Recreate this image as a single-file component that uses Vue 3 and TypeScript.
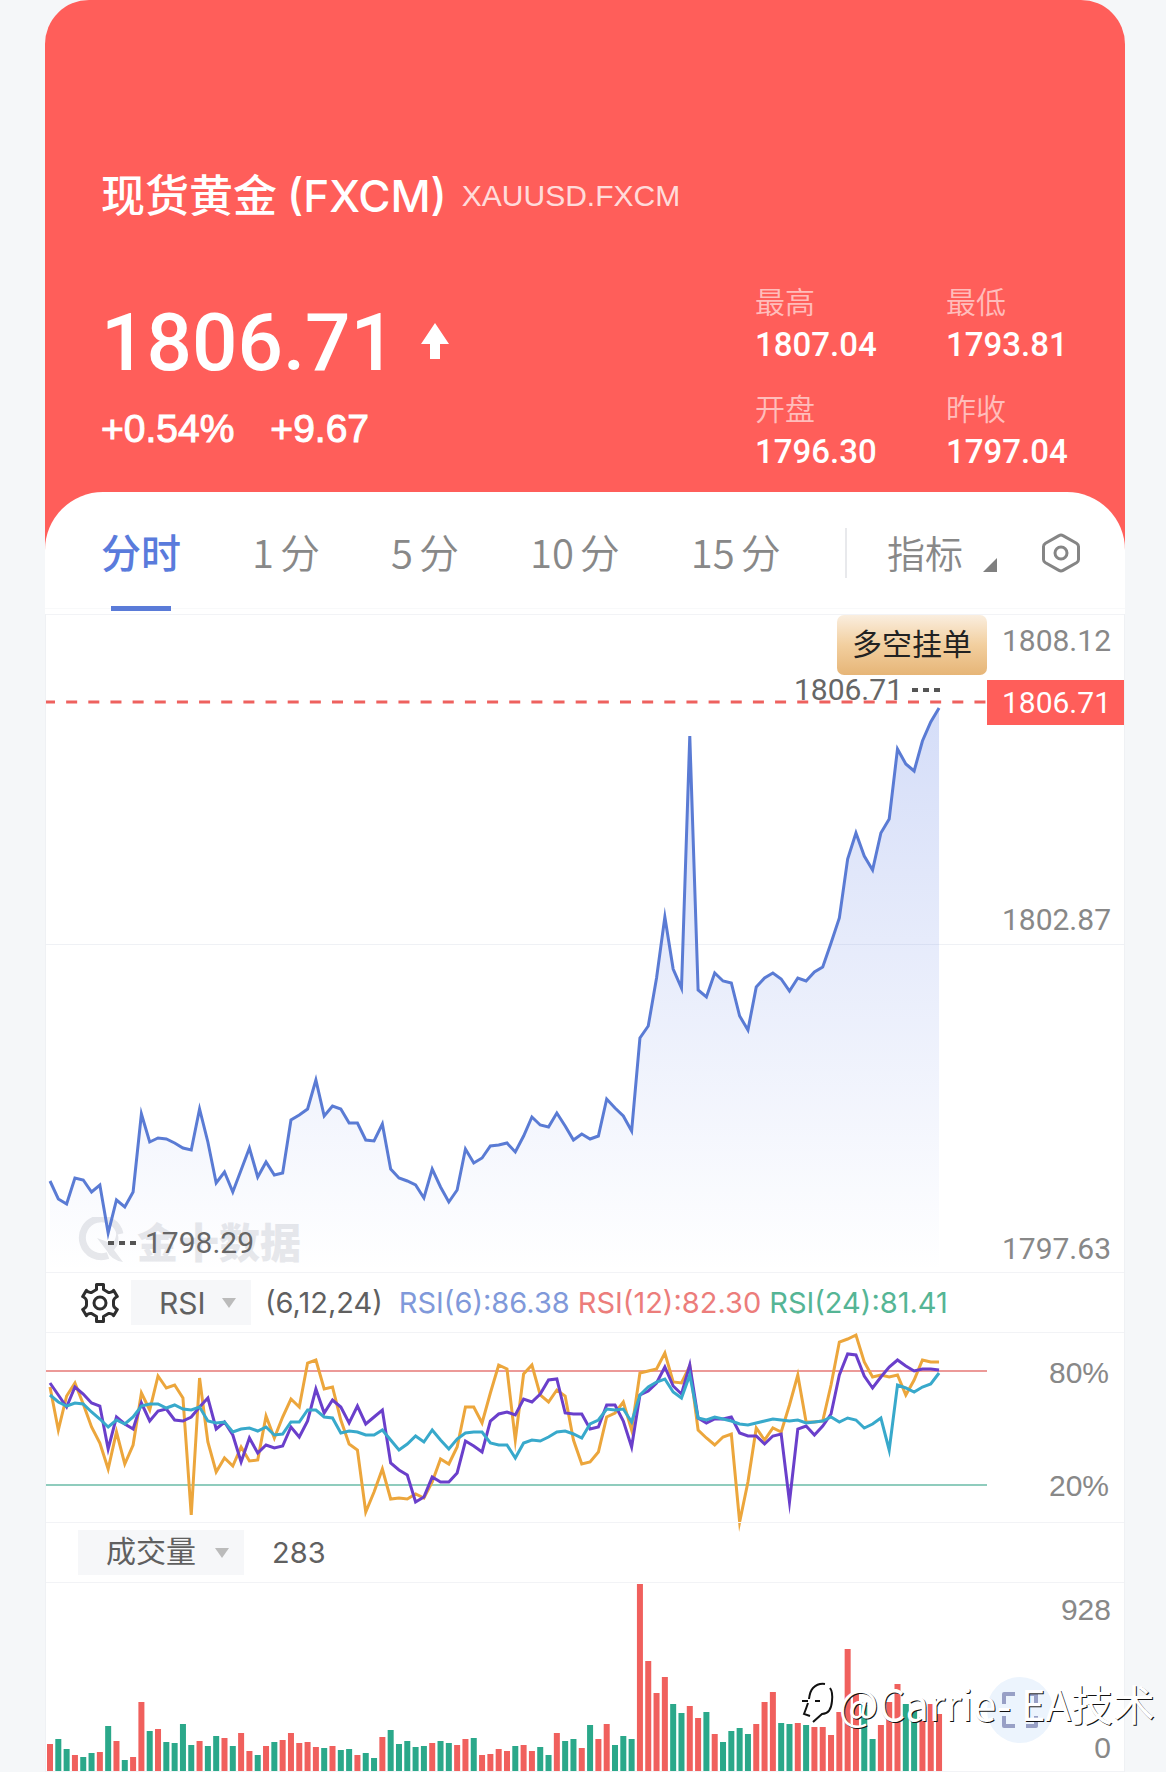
<script setup lang="ts">
import { ref } from 'vue'

interface Stat { label: string; value: string }
interface Tab { id: string; count: string; unit: string }

const stats: Stat[] = [
  { label: '最高', value: '1807.04' },
  { label: '最低', value: '1793.81' },
  { label: '开盘', value: '1796.30' },
  { label: '昨收', value: '1797.04' },
]

const tabs: Tab[] = [
  { id: 'line', count: '', unit: '分时' },
  { id: 'm1', count: '1', unit: '分' },
  { id: 'm5', count: '5', unit: '分' },
  { id: 'm10', count: '10', unit: '分' },
  { id: 'm15', count: '15', unit: '分' },
]
const active = ref('line')
const indicator = ref('RSI')
const lower = ref('成交量')

/* Samples share one horizontal step; vertical values are sheet units. */
const STEP = 8.3
const START = 4
const PRICE_TOP = 615
const PRICE_HEIGHT = 657
const RSI_TOP = 1333

const price: number[] = [
  1181, 1199, 1204, 1178, 1180, 1192, 1185, 1233, 1200, 1207, 1192, 1114, 1142, 1138, 1139, 1143, 1148, 1150,
  1109, 1142, 1183, 1172, 1192, 1170, 1148, 1177, 1162, 1175, 1173, 1120, 1115, 1109, 1080, 1116, 1106, 1109,
  1123, 1123, 1140, 1141, 1124, 1169, 1178, 1181, 1185, 1198, 1169, 1187, 1202, 1190, 1149, 1163, 1158, 1146,
  1145, 1143, 1152, 1136, 1117, 1125, 1127, 1113, 1126, 1140, 1134, 1139, 1136, 1099, 1108, 1116, 1131, 1038,
  1026, 978, 917, 969, 988, 736, 990, 997, 973, 981, 983, 1016, 1030, 987, 978, 973, 979, 991, 978, 981, 972,
  967, 943, 918, 859, 833, 856, 870, 833, 819, 749, 764, 771, 741, 722, 708,
]

const rsi6: number[] = [
  1387, 1430, 1396, 1383, 1404, 1427, 1443, 1469, 1432, 1464, 1445, 1393, 1410, 1376, 1388, 1385, 1398, 1515,
  1378, 1442, 1472, 1458, 1466, 1447, 1461, 1460, 1416, 1438, 1417, 1399, 1407, 1363, 1360, 1389, 1387, 1420,
  1444, 1450, 1512, 1492, 1469, 1499, 1498, 1499, 1494, 1498, 1482, 1459, 1464, 1447, 1407, 1407, 1423, 1393,
  1365, 1369, 1440, 1374, 1365, 1395, 1402, 1390, 1396, 1440, 1464, 1462, 1452, 1417, 1413, 1402, 1430, 1373,
  1371, 1369, 1353, 1382, 1383, 1366, 1430, 1438, 1445, 1437, 1434, 1522, 1482, 1428, 1440, 1428, 1432, 1405,
  1375, 1422, 1422, 1421, 1385, 1342, 1339, 1335, 1362, 1377, 1375, 1377, 1375, 1395, 1380, 1360, 1362, 1362,
]

const rsi12: number[] = [
  1383, 1395, 1407, 1387, 1394, 1403, 1406, 1449, 1417, 1424, 1429, 1403, 1421, 1411, 1409, 1420, 1421, 1417,
  1407, 1398, 1429, 1422, 1435, 1462, 1438, 1453, 1445, 1448, 1446, 1427, 1437, 1421, 1389, 1413, 1400, 1407,
  1423, 1406, 1424, 1417, 1410, 1463, 1470, 1475, 1502, 1497, 1477, 1482, 1482, 1473, 1441, 1446, 1452, 1421,
  1414, 1412, 1415, 1399, 1402, 1394, 1380, 1379, 1413, 1414, 1414, 1429, 1427, 1405, 1405, 1421, 1447, 1395,
  1391, 1383, 1367, 1386, 1394, 1365, 1418, 1423, 1419, 1419, 1417, 1433, 1436, 1436, 1444, 1436, 1434, 1502,
  1429, 1426, 1435, 1426, 1414, 1375, 1354, 1355, 1376, 1388, 1377, 1367, 1360, 1366, 1371, 1369, 1369, 1370,
]

const rsi24: number[] = [
  1395, 1402, 1406, 1403, 1404, 1412, 1419, 1427, 1420, 1424, 1417, 1406, 1404, 1404, 1408, 1405, 1409, 1410,
  1407, 1421, 1423, 1422, 1432, 1429, 1428, 1431, 1427, 1435, 1434, 1422, 1422, 1410, 1410, 1417, 1418, 1433,
  1431, 1432, 1435, 1435, 1430, 1440, 1450, 1444, 1436, 1442, 1430, 1440, 1449, 1439, 1433, 1432, 1432, 1443,
  1445, 1445, 1458, 1443, 1440, 1441, 1437, 1432, 1431, 1434, 1438, 1424, 1420, 1409, 1410, 1409, 1422, 1395,
  1387, 1382, 1379, 1392, 1398, 1375, 1418, 1420, 1417, 1419, 1421, 1424, 1425, 1423, 1421, 1419, 1420, 1421,
  1420, 1423, 1422, 1421, 1417, 1422, 1418, 1420, 1428, 1424, 1418, 1450, 1385, 1388, 1392, 1387, 1384, 1373,
]

const volume: number[] = [
  27, 32, 22, 16, 14, 18, 19, 45, 30, 11, 14, 69, 40, 42, 29, 28, 47, 26, 30, 25, 35, 33, 25, 38, 20, 16, 25,
  29, 31, 38, 28, 29, 24, 23, 25, 21, 22, 16, 18, 13, 34, 41, 27, 30, 24, 25, 28, 30, 28, 26, 32, 33, 16, 17,
  22, 20, 25, 26, 20, 24, 16, 38, 30, 32, 23, 46, 32, 47, 26, 35, 32, 187, 110, 78, 94, 67, 58, 65, 53, 59,
  37, 29, 40, 43, 37, 47, 69, 79, 48, 47, 48, 46, 44, 44, 36, 59, 122, 77, 66, 32, 46, 69, 87, 67, 60, 54,
  67, 57,
]
/* Sample numbers that closed lower; the rest closed higher. */
const falling = new Set<number>([
  1, 2, 4, 5, 7, 9, 12, 14, 15, 16, 17, 19, 20, 22, 25, 27, 33, 35, 36, 38, 39, 41, 42, 43, 44, 45, 47, 48, 51,
  56, 59, 60, 62, 63, 65, 68, 69, 70, 75, 76, 79, 81, 82, 83, 84, 88, 89, 91, 98, 99, 103, 104,
])

const px = (i: number): number => Math.round((START + i * STEP) * 10) / 10
const trace = (values: number[], top: number): string =>
  values.map((v, i) => `${px(i)},${v - top}`).join(' ')

const priceLine = trace(price, PRICE_TOP)
const priceArea = `${px(0)},${PRICE_HEIGHT} ${priceLine} ${px(price.length - 1)},${PRICE_HEIGHT}`
const rsiLines = [
  { id: 'rsi6', color: '#eca63c', points: trace(rsi6, RSI_TOP) },
  { id: 'rsi12', color: '#6a3fcb', points: trace(rsi12, RSI_TOP) },
  { id: 'rsi24', color: '#38a9cb', points: trace(rsi24, RSI_TOP) },
]
const bars = volume.map((h, i) => ({
  x: px(i) - 3,
  y: 188 - h,
  h,
  color: falling.has(i) ? '#2ba88a' : '#f0605d',
}))
</script>

<template>
  <main class="page">
    <header class="hero">
      <h1 class="title">
        <span class="name">现货黄金</span><span class="market">(FXCM)</span><span class="symbol">XAUUSD.FXCM</span>
      </h1>
      <div class="quote">
        <div class="last">
          <div class="price">
            <span>1806.71</span>
            <svg width="28" height="36" viewBox="0 0 28 36" aria-hidden="true">
              <path d="M14 0 28 21H19V36H9V21H0Z" fill="#fff" />
            </svg>
          </div>
          <div class="change"><span>+0.54%</span><span>+9.67</span></div>
        </div>
        <dl class="stats">
          <div v-for="s in stats" :key="s.label">
            <dt>{{ s.label }}</dt>
            <dd>{{ s.value }}</dd>
          </div>
        </dl>
      </div>
    </header>

    <section class="sheet">
      <nav class="toolbar">
        <div class="tabs">
          <button
            v-for="t in tabs"
            :key="t.id"
            type="button"
            class="tab"
            :class="{ active: active === t.id }"
            @click="active = t.id"
          >
            <span v-if="t.count">{{ t.count }}</span><span>{{ t.unit }}</span>
          </button>
        </div>
        <div class="tools">
          <button type="button" class="tool">
            指标
            <svg class="corner" width="14" height="14" viewBox="0 0 14 14" aria-hidden="true">
              <path d="M14 0V14H0Z" fill="#808080" />
            </svg>
          </button>
          <button type="button" class="hex" aria-label="设置">
            <svg width="38" height="40" viewBox="0 0 38 40" fill="none" stroke="#858585" stroke-width="3" stroke-linejoin="round">
              <path d="M17 2.6Q19 1.4 21 2.6L34.500 10.200Q36.500 11.400 36.500 13.500V26.500Q36.500 28.600 34.500 29.800L21 37.400Q19 38.600 17 37.400L3.500 29.800Q1.500 28.600 1.500 26.500V13.500Q1.500 11.400 3.500 10.200Z" />
              <circle cx="19" cy="20" r="6" />
            </svg>
          </button>
        </div>
      </nav>

      <div class="charts">
        <div class="row price-row">
          <div class="plot">
            <div class="mark">
              <svg width="48" height="46" viewBox="0 0 48 46" fill="none" aria-hidden="true">
                <path d="M31 38.500A19 19 0 1 1 43 17" stroke="#e7e8eb" stroke-width="7" />
                <path d="M40 14Q44 26 37 33L46 45Q34 43 30 34L20 21 36 27Q39 21 40 14Z" fill="#e7e8eb" />
              </svg>
              <span>金十数据</span>
            </div>
            <svg class="canvas" viewBox="0 0 940 657" preserveAspectRatio="none">
              <defs>
                <linearGradient id="fade" gradientUnits="userSpaceOnUse" x1="0" y1="90" x2="0" y2="657">
                  <stop offset="0" stop-color="#5b7ce4" stop-opacity="0.26" />
                  <stop offset="0.5" stop-color="#5b7ce4" stop-opacity="0.13" />
                  <stop offset="1" stop-color="#5b7ce4" stop-opacity="0" />
                </linearGradient>
              </defs>
              <polygon :points="priceArea" fill="url(#fade)" />
              <line x1="0" y1="87" x2="940" y2="87" stroke="#ee615e" stroke-width="3" stroke-dasharray="11 11.13" stroke-dashoffset="2" />
              <polyline :points="priceLine" fill="none" stroke="#5a7bd4" stroke-width="3" stroke-miterlimit="10" />
            </svg>
            <button type="button" class="badge">多空挂单</button>
            <span class="tip high">1806.71<i></i></span>
            <span class="tip low"><i></i>1798.29</span>
          </div>
          <div class="axis price-axis">
            <span>1808.12</span>
            <span class="middle">1802.87</span>
            <span class="lowest">1797.63</span>
            <strong>1806.71</strong>
          </div>
        </div>

        <div class="bar">
          <button type="button" class="gear" aria-label="指标设置">
            <svg width="38" height="40" viewBox="0 0 38 40" fill="none" stroke="#2e2e2e" stroke-width="3" stroke-linejoin="round">
              <path d="M15.500 1.500H22.500V6.500L27.500 9.500Q31 10 32.600 7.400L36.300 13.500Q32.500 15.500 32.500 18V22Q32.500 24.500 36.300 26.500L32.600 32.600Q31 30 27.500 30.500L22.500 33.500V38.500H15.500V33.500L10.500 30.500Q7 30 5.400 32.600L1.700 26.500Q5.500 24.500 5.500 22V18Q5.500 15.500 1.700 13.500L5.400 7.400Q7 10 10.500 9.500L15.500 6.500Z" />
              <circle cx="19" cy="20" r="6" />
            </svg>
          </button>
          <label class="picker rsi-picker">
            <select v-model="indicator" aria-label="副图指标">
              <option>RSI</option>
              <option>MACD</option>
            </select>
            <svg width="14" height="10" viewBox="0 0 14 10" aria-hidden="true"><path d="M0 0H14L7 10Z" fill="#bbb" /></svg>
          </label>
          <span class="params">(6,12,24)</span>
          <span class="readings">
            <span class="r6">RSI(6):86.38</span>
            <span class="r12">RSI(12):82.30</span>
            <span class="r24">RSI(24):81.41</span>
          </span>
        </div>

        <div class="row rsi-row">
          <div class="plot">
            <svg class="canvas" viewBox="0 0 940 189" preserveAspectRatio="none">
              <line x1="0" y1="38" x2="940" y2="38" stroke="#ec9a98" stroke-width="2" />
              <line x1="0" y1="152" x2="940" y2="152" stroke="#8fccbd" stroke-width="2" />
              <polyline
                v-for="l in rsiLines"
                :key="l.id"
                :points="l.points"
                fill="none"
                :stroke="l.color"
                stroke-width="3"
                stroke-miterlimit="10"
              />
            </svg>
          </div>
          <div class="axis rsi-axis">
            <span>80%</span>
            <span>20%</span>
          </div>
        </div>

        <div class="bar">
          <label class="picker volume-picker">
            <select v-model="lower" aria-label="成交量指标">
              <option>成交量</option>
              <option>持仓量</option>
            </select>
            <svg width="14" height="10" viewBox="0 0 14 10" aria-hidden="true"><path d="M0 0H14L7 10Z" fill="#bbb" /></svg>
          </label>
          <span class="params">283</span>
        </div>

        <div class="row volume-row">
          <div class="plot">
            <svg class="canvas" viewBox="0 0 940 188" preserveAspectRatio="none">
              <rect v-for="(b, i) in bars" :key="i" :x="b.x" :y="b.y" width="6" :height="b.h" :fill="b.color" />
            </svg>
          </div>
          <div class="axis volume-axis">
            <span>928</span>
            <span>0</span>
          </div>
          <button type="button" class="expand" aria-label="全屏">
            <svg width="38" height="38" viewBox="0 0 38 38" fill="none" stroke="#98a0c6" stroke-width="4" stroke-linejoin="round">
              <path d="M3 13V3H14M25 3H35V13M35 25V35H25M14 35H3V25" />
            </svg>
          </button>
          <div class="signature">
            <svg width="34" height="44" viewBox="0 0 34 44" fill="none" aria-hidden="true">
              <path d="M10 9H17M6 19H17M12 10V19Q11 28 6 35M19 3H24Q29 4 29 11V22Q29 30 21 31L13 39V32M15 20Q15 28 18 32" stroke="#fff" stroke-width="3" />
              <path d="M1 20H7M14 20H19M8 18Q9 10 12 7Q17 2 24 3M29 7Q32 11 31 20Q30 33 21 33L12 41M7 22Q5 28 3 33L9 35" stroke="#111" stroke-width="2" />
            </svg>
            <span>@Carrie- EA技术</span>
          </div>
        </div>
      </div>
    </section>
  </main>
</template>

<style>
body {
  margin: 0;
  background: #f5f7f9;
}
</style>

<style scoped>
.page {
  padding: 0 41px 0 45px;
  overflow: hidden;
  font-family: "Liberation Sans", "Noto Sans CJK SC", sans-serif;
  color: #888;
}
button,
select {
  font: inherit;
  color: inherit;
  border: 0;
  padding: 0;
  margin: 0;
  background: none;
}
button {
  cursor: pointer;
}
svg {
  display: block;
  flex: none;
}

.hero {
  box-sizing: border-box;
  height: 550px;
  padding: 168px 0 0 56px;
  border-radius: 44px 44px 0 0;
  background: #ff5e5a;
  color: #fff;
}
.title {
  display: flex;
  align-items: center;
  margin: 0;
  line-height: 56px;
  font-weight: 500;
}
.name {
  padding-bottom: 6px;
  font-family: "Noto Sans CJK SC", sans-serif;
  font-size: 44px;
  line-height: 50px;
}
.market {
  margin-left: 10px;
  font-family: Inter, sans-serif;
  font-size: 44px;
}
.symbol {
  margin-left: 15px;
  font-size: 30px;
  font-weight: 400;
  color: rgba(255, 255, 255, 0.8);
}
.quote {
  display: flex;
  justify-content: space-between;
  margin-top: 61px;
}
.last {
  padding-top: 18px;
}
.price {
  display: flex;
  align-items: center;
  gap: 25px;
  font-family: Roboto, sans-serif;
  font-size: 80px;
  font-weight: 500;
  line-height: 80px;
}
.price svg {
  margin-bottom: 4px;
}
.change {
  display: flex;
  gap: 36px;
  margin-top: 22px;
  font-size: 39px;
  line-height: 48px;
  -webkit-text-stroke: 1px #fff;
}
.stats {
  display: grid;
  grid-template-columns: 191px 179px;
  row-gap: 21px;
  margin: 0;
}
.stats dt {
  padding-bottom: 4px;
  font-family: "Noto Sans CJK SC", sans-serif;
  font-size: 30px;
  font-weight: 350;
  line-height: 30px;
  color: rgba(255, 255, 255, 0.6);
}
.stats dd {
  margin: 0;
  font-family: Roboto, sans-serif;
  font-size: 33px;
  font-weight: 500;
  line-height: 52px;
}

.sheet {
  position: relative;
  margin-top: -58px;
  border-radius: 58px 58px 0 0;
  background: #fff;
}
.toolbar {
  box-sizing: border-box;
  display: flex;
  align-items: stretch;
  justify-content: space-between;
  height: 117px;
  padding: 5px 45px 0 56px;
  border-bottom: 1px solid #f8f9fa;
  font-family: "Noto Sans CJK SC", sans-serif;
  font-size: 40px;
  font-weight: 350;
}
.tabs {
  display: flex;
  gap: 71px;
}
.tab {
  position: relative;
  display: flex;
  align-items: center;
  gap: 6px;
  padding-bottom: 4px;
  white-space: nowrap;
}
.tab.active {
  color: #5a7bdc;
  font-weight: 500;
}
.tab.active::after {
  content: "";
  position: absolute;
  left: 10px;
  right: 10px;
  bottom: -3px;
  height: 5px;
  background: #5a7bd8;
}
.tools {
  display: flex;
  align-items: center;
}
.tools::before {
  content: "";
  width: 2px;
  height: 50px;
  margin-right: 40px;
  background: #e8e9ec;
}
.tool {
  display: flex;
  align-items: center;
  gap: 20px;
  padding-bottom: 2px;
  font-size: 38px;
  line-height: 56px;
  white-space: nowrap;
}
.corner {
  align-self: flex-end;
  margin-bottom: 8px;
}
.hex {
  margin-left: 45px;
}

.charts {
  margin-top: 5px;
  border: 1px solid #eff1f4;
  border-top: 0;
}
.row,
.bar {
  position: relative;
  box-sizing: border-box;
  display: flex;
  border-top: 1px solid #f2f3f6;
}
.plot {
  position: relative;
  flex: 1;
  min-width: 0;
}
.canvas {
  position: relative;
  width: 100%;
  height: 100%;
  overflow: visible;
}
.axis {
  box-sizing: border-box;
  display: flex;
  flex: none;
  flex-direction: column;
  align-items: flex-end;
  justify-content: space-between;
  width: 137px;
  padding-right: 13px;
  font-size: 30px;
  line-height: 34px;
}
.price-row {
  height: 658px;
}
.price-row::before {
  content: "";
  position: absolute;
  top: 50%;
  left: 0;
  right: 0;
  height: 1px;
  background: #eff1f5;
}
.price-axis {
  position: relative;
  display: grid;
  grid-template-columns: 1fr;
  grid-template-rows: 1fr 1fr;
  align-items: start;
  justify-items: end;
  padding-top: 9px;
  padding-bottom: 6px;
  font-family: Roboto, sans-serif;
}
.price-axis span {
  grid-column: 1;
  grid-row: 1;
}
.price-axis .middle {
  align-self: end;
  margin-bottom: 8px;
}
.price-axis .lowest {
  grid-row: 2;
  align-self: end;
}
.price-axis strong {
  position: absolute;
  top: 65px;
  left: 0;
  box-sizing: border-box;
  width: 100%;
  padding-right: 13px;
  background: #ff5e5a;
  color: #fff;
  font-weight: 400;
  line-height: 45px;
  text-align: right;
}
.badge {
  position: absolute;
  top: 0;
  right: 0;
  width: 150px;
  padding-bottom: 6px;
  border-radius: 7px;
  background: linear-gradient(#faeedf, #f2cf9f 50%, #e6b577);
  color: #222;
  font-family: "Noto Sans CJK SC", sans-serif;
  font-size: 30px;
  line-height: 54px;
}
.tip {
  position: absolute;
  display: flex;
  align-items: center;
  gap: 9px;
  color: #666;
  font-family: Roboto, sans-serif;
  font-size: 30px;
  line-height: 34px;
}
.tip i {
  width: 28px;
  height: 4px;
  background: repeating-linear-gradient(90deg, #555 0 6px, transparent 6px 11px);
}
.high {
  top: 58px;
  right: 47px;
}
.low {
  bottom: 12px;
  left: 62px;
}
.mark {
  position: absolute;
  bottom: 4px;
  left: 31px;
  display: flex;
  align-items: center;
  gap: 12px;
  color: #e7e8eb;
  font-family: "Noto Sans CJK SC", sans-serif;
  font-size: 41px;
  font-weight: 900;
  line-height: 56px;
}

.bar {
  align-items: center;
  height: 60px;
  font-family: Inter, "Noto Sans CJK SC", sans-serif;
  font-size: 29px;
  color: #606060;
}
.gear {
  margin-left: 35px;
}
.picker {
  position: relative;
  display: flex;
  align-items: center;
  height: 45px;
  background: #f6f7f9;
}
.picker select {
  width: 100%;
  height: 100%;
  appearance: none;
  outline: 0;
}
.picker svg {
  position: absolute;
  right: 15px;
  pointer-events: none;
}
.rsi-picker {
  width: 120px;
  margin-left: 12px;
}
.rsi-picker select {
  padding-left: 28px;
  font-size: 30px;
}
.volume-picker {
  width: 166px;
  margin-left: 32px;
}
.volume-picker select {
  padding-bottom: 6px;
  padding-left: 28px;
  font-family: "Noto Sans CJK SC", sans-serif;
  font-size: 30px;
  line-height: 39px;
}
.volume-picker + .params {
  margin-left: 28px;
}
.params {
  margin-left: 14px;
}
.readings {
  display: flex;
  gap: 8px;
  margin-left: 16px;
  white-space: nowrap;
}
.r6 {
  color: #8099da;
}
.r12 {
  color: #ec7d7b;
}
.r24 {
  color: #55b595;
}

.rsi-row {
  height: 190px;
}
.rsi-axis {
  padding-top: 23px;
  padding-right: 15px;
  padding-bottom: 19px;
}
.volume-row {
  height: 190px;
  border-bottom: 1px solid #f2f3f6;
}
.volume-axis {
  padding-top: 10px;
  padding-bottom: 6px;
}
.expand {
  position: absolute;
  right: 71px;
  bottom: 28px;
  display: flex;
  align-items: center;
  justify-content: center;
  width: 66px;
  height: 66px;
  border-radius: 50%;
  background: #ecf4fd;
}
.signature {
  position: absolute;
  right: -31px;
  bottom: 38px;
  display: flex;
  align-items: center;
  gap: 4px;
  color: #fff;
  font-family: "Noto Sans CJK SC", sans-serif;
  font-size: 42px;
  font-weight: 400;
  line-height: 60px;
  white-space: nowrap;
  text-shadow: 1px 1px 0 #111;
}
</style>
